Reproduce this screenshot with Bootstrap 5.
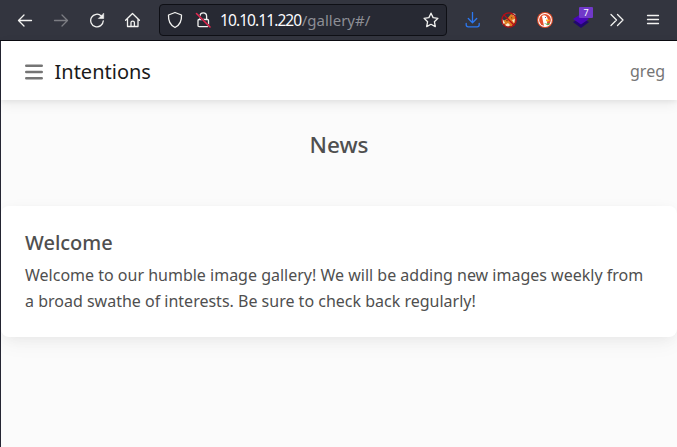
<!DOCTYPE html>
<html lang="en">
<head>
<meta charset="utf-8">
<meta name="viewport" content="width=device-width, initial-scale=1">
<title>Intentions</title>
<link href="https://cdn.jsdelivr.net/npm/bootstrap@5.3.0/dist/css/bootstrap.min.css" rel="stylesheet">
<style>
body{font-family:"Noto Sans",sans-serif;color:#4f4f4f;line-height:1.6;background:#fbfbfb;height:447px;overflow:hidden}
.browser-bar{height:41px;background:#33353f;border-bottom:1px solid #0c0c12;padding-left:17px}
.browser-bar svg{display:block;flex:none;fill:none;stroke:#f3f3f1;stroke-width:1.3;stroke-linecap:round;stroke-linejoin:round}
.browser-bar .inactive{opacity:.38}
.browser-bar .download{stroke:#2c78f0}
.browser-bar .banned{stroke:#b90d16}
.tools{gap:20px;width:142px}
.address{width:288px;height:32px;background:#272933;border:1px solid #0e0f15;border-radius:4px;padding:0 7px}
.insecure{margin-left:12px}
.url{font-size:15px;color:#fbfbfe;margin-left:9px;line-height:20px;white-space:nowrap}
.host{font-size:15.5px;letter-spacing:-.92px}
.url-path{color:#8d8e95;margin-left:.5px}
.extensions{gap:20px;margin-left:18px}
.tab-count{position:absolute;left:6px;top:-5px;width:14px;height:11px;background:#7139c9;border-radius:1px;color:#fff;font-size:9px;line-height:11px;text-align:center}
.viewport{height:406px;border-left:1px solid #252633;background:#fbfbfb}
.site-nav{height:59px;background:#fff;box-shadow:0 4px 12px 0 rgba(0,0,0,.07),0 2px 4px rgba(0,0,0,.05);padding:2px 12px 0 24px}
.site-title{font-size:20px;color:#1a1a1a;margin-left:11.500px;line-height:32px}
.user-name{color:#757575}
.news-title{font-size:22.5px;line-height:27px;font-weight:500;padding-top:31px;margin:0 0 48px}
.news-card{border:0;border-radius:8px;box-shadow:0 2px 15px -3px rgba(0,0,0,.07),0 10px 20px -2px rgba(0,0,0,.04)}
.news-card .card-body{padding:25px 24px 23px}
.news-card h5{font-size:20px;font-weight:500;line-height:24px}
</style>
<script src="https://cdn.jsdelivr.net/npm/bootstrap@5.3.0/dist/js/bootstrap.bundle.min.js"></script>
</head>
<body>
<header class="browser-bar d-flex align-items-center">
  <div class="tools d-flex align-items-center">
    <svg width="16" height="16" viewBox="0 0 16 16"><path d="M14.500 8.500H1.500M7 3L1.500 8.500L7 14"/></svg>
    <svg class="inactive" width="16" height="16" viewBox="0 0 16 16"><path d="M1.500 8.500h13M9 3l5.500 5.500L9 14"/></svg>
    <svg width="16" height="16" viewBox="0 0 16 16"><path d="M14.300 8.800A6.300 6.300 0 1 1 12.300 3.900"/><path d="M14.700 1.500v5h-5z" fill="#f3f3f1" stroke-width=".6"/></svg>
    <svg width="16" height="16" viewBox="0 0 16 16"><path d="M.6 8.300L7.500 1.500l6.900 6.800M2.500 7v7.500h10.500V7M6 14.500v-4q0-1.300 1.700-1.300t1.700 1.300v4"/></svg>
  </div>
  <div class="address d-flex align-items-center">
    <svg width="16" height="18" viewBox="0 0 16 18"><path d="M8 1.500L14.500 4C14.800 9.500 13.200 14 8 16.500C2.800 14 1.200 9.500 1.500 4Z"/></svg>
    <svg class="insecure" width="16" height="18" viewBox="0 0 16 18"><g transform="translate(3.500 0)"><path d="M.5 8.500h8.500q1 0 1 1v5q0 1.200-1.200 1.200H.7q-1.200 0-1.200-1.200v-5q0-1 1-1ZM1.500 8V5.200a3.300 3.300 0 0 1 6.600 0V8"/></g><path d="M2 3l13 13" stroke="#272933" stroke-width="2"/><path d="M1.500 2.500l13.500 13.500" stroke="#e22850" stroke-width="1.600"/></svg>
    <div class="url"><span class="host">10.10.11.220</span><span class="url-path">/gallery#/</span></div>
    <svg class="ms-auto" width="16" height="16" viewBox="0 0 16 16"><path d="M8 1.200l2.100 4.400 4.800.7-3.500 3.400.9 4.900L8 12.300l-4.300 2.300.9-4.900L1.100 6.300l4.800-.7z"/></svg>
  </div>
  <div class="extensions d-flex align-items-center">
    <svg class="download" width="16" height="16" viewBox="0 0 16 16"><path d="M7.500 .5v10M3.300 6.500l4.200 4.200 4.200-4.200M1.200 11.500v1.300q0 2 2 2h9q2 0 2-2v-1.300"/></svg>
    <svg width="16" height="16" viewBox="0 0 16 16"><g stroke="none"><path d="M1 9l5-2 4-5 5 2-.5 6-4 4.500-6-.5z" fill="#df7d22"/><path d="M11 1l3.500 1-1 3zM1.500 6.500L4 11l-2.500 1.500z" fill="#f2ead2"/><path d="M4 13l3-2 2 2-2 2zM11 8l3-1-1 4z" fill="#f9e9ce"/><path d="M5 8l2 .5-1 1zM10 5l1.500 1-1 .5z" fill="#3b2517"/></g><g class="banned"><circle cx="8" cy="8" r="7.200"/><path d="M3 3l10 10"/></g></svg>
    <svg width="16" height="16" viewBox="0 0 16 16"><g stroke="none"><circle cx="8" cy="8" r="8" fill="#de4b28"/><circle cx="8" cy="8" r="6.900" fill="#fff"/><circle cx="8" cy="8" r="5.900" fill="#e34e2c"/><path d="M5 4q3-2 5 1l1 3-1 2 .5 4H7L5.500 7z" fill="#fff"/><path d="M9 7.500l4 .3-1 1.500H9z" fill="#fcbc20"/><path d="M7 11l3 .8 2.500-1v2L10 13z" fill="#52ac46"/><circle cx="8.500" cy="5.500" r=".6" fill="#2d4f8e"/></g></svg>
    <div class="position-relative"><svg width="16" height="16" viewBox="0 0 16 16"><g stroke="none"><path d="M0 10l8-4 8 4-8 6z" fill="#21076f"/><path d="M0 7l8-5 8 5-8 5.500z" fill="#4907b7"/></g></svg><span class="tab-count">7</span></div>
    <svg width="16" height="16" viewBox="0 0 16 16"><path d="M2 2.500L7.500 8L2 13.500M8.500 2.500L14 8l-5.500 5.500"/></svg>
    <svg width="16" height="16" viewBox="0 0 16 16"><path d="M2.500 3.500h11M2.500 7.500h11M2.500 11.500h11"/></svg>
  </div>
</header>
<div class="viewport">
  <nav class="site-nav d-flex align-items-center">
    <svg width="18" height="16" viewBox="0 0 18 16" fill="none" stroke="#757575" stroke-width="2.600" stroke-linecap="round"><path d="M1.300 1.700h15.400M1.300 8h15.400M1.300 14.300h15.400"/></svg>
    <span class="site-title">Intentions</span>
    <span class="user-name ms-auto">greg</span>
  </nav>
  <main>
    <h4 class="news-title text-center">News</h4>
    <section class="card news-card">
      <div class="card-body">
        <h5 class="card-title mb-2">Welcome</h5>
        <p class="card-text">Welcome to our humble image gallery! We will be adding new images weekly from a broad swathe of interests. Be sure to check back regularly!</p>
      </div>
    </section>
  </main>
</div>
</body>
</html>
